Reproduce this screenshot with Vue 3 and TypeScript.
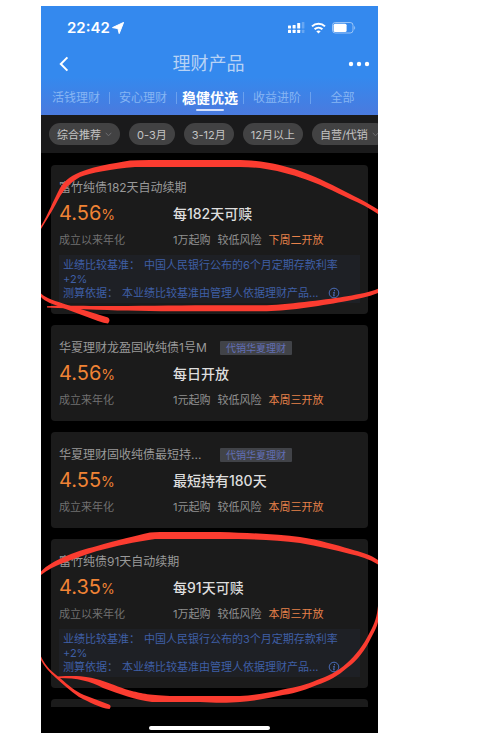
<script setup lang="ts">
import { ref } from 'vue'

interface Product {
  name: string
  tag?: string
  rate: string
  rateLabel: string
  term: string
  entry: string
  open: string
  benchmark?: string
}

const tabs: string[] = ['活钱理财', '安心理财', '稳健优选', '收益进阶', '全部']
const activeTab = ref<string>('稳健优选')

const filters: { label: string; menu?: boolean }[] = [
  { label: '综合推荐', menu: true },
  { label: '0-3月' },
  { label: '3-12月' },
  { label: '12月以上' },
  { label: '自营/代销', menu: true },
]

const products: Product[] = [
  {
    name: '富竹纯债182天自动续期',
    rate: '4.56',
    rateLabel: '成立以来年化',
    term: '每182天可赎',
    entry: '1万起购',
    open: '下周二开放',
    benchmark: '中国人民银行公布的6个月定期存款利率',
  },
  {
    name: '华夏理财龙盈固收纯债1号M',
    tag: '代销华夏理财',
    rate: '4.56',
    rateLabel: '成立来年化',
    term: '每日开放',
    entry: '1元起购',
    open: '本周三开放',
  },
  {
    name: '华夏理财固收纯债最短持...',
    tag: '代销华夏理财',
    rate: '4.55',
    rateLabel: '成立来年化',
    term: '最短持有180天',
    entry: '1元起购',
    open: '本周三开放',
  },
  {
    name: '富竹纯债91天自动续期',
    rate: '4.35',
    rateLabel: '成立以来年化',
    term: '每91天可赎',
    entry: '1万起购',
    open: '本周三开放',
    benchmark: '中国人民银行公布的3个月定期存款利率',
  },
]
</script>

<template>
  <div class="page" lang="zh-CN">
    <main class="phone">
      <header class="header">
        <div class="status">
          <span class="time">22:42</span>
          <svg class="locate" width="12" height="12" viewBox="0 0 12 12" aria-hidden="true">
            <path d="M11.6.4 7.2 11.6 5.9 6.6.5 5.6Z" fill="#fff" stroke="#fff" stroke-width="1" stroke-linejoin="round" />
          </svg>
          <span class="status-icons">
            <svg width="17" height="12" viewBox="0 0 17 12" aria-hidden="true">
              <g fill="#fff">
                <rect x="0" y="3.5" width="3" height="3" rx=".5" />
                <rect x="4.6" y="3" width="3" height="3.5" rx=".5" />
                <rect x="9.2" y="1" width="3" height="5.5" rx=".5" />
                <rect x="0" y="7.8" width="3" height="3.2" rx=".5" />
                <rect x="4.6" y="7.8" width="3" height="3.2" rx=".5" />
                <rect x="9.2" y="7.8" width="3" height="3.2" rx=".5" />
                <rect x="13.8" y="0" width="2.6" height="6.5" rx=".5" opacity=".25" />
                <rect x="13.8" y="7.8" width="2.6" height="3.2" rx=".5" opacity=".25" />
              </g>
            </svg>
            <svg width="15" height="12" viewBox="0 0 15 12" aria-hidden="true">
              <g fill="none" stroke="#fff" stroke-width="2">
                <path d="M1 4.4C4.6.8 10.4.8 14 4.4" />
                <path d="M3.6 7.2c2.2-2.1 5.6-2.1 7.8 0" />
              </g>
              <path d="M7.5 11.6 5.3 9.3c1.3-1.1 3.1-1.1 4.4 0Z" fill="#fff" />
            </svg>
            <svg width="24" height="12" viewBox="0 0 24 12" aria-hidden="true">
              <rect x=".5" y=".5" width="20.5" height="10.5" rx="2.8" fill="none" stroke="#fff" stroke-opacity=".5" />
              <rect x="1.6" y="1.7" width="13" height="8.2" rx="1.5" fill="#fff" />
              <path d="M22.2 4v3.8c1.3-.6 1.3-3.2 0-3.8Z" fill="#fff" fill-opacity=".5" />
            </svg>
          </span>
        </div>

        <div class="title-bar">
          <button class="icon-button" type="button" aria-label="返回">
            <svg width="10" height="16" viewBox="0 0 10 16" aria-hidden="true">
              <path d="M8.4 1.4 1.8 8l6.6 6.6" fill="none" stroke="#fff" stroke-width="2" />
            </svg>
          </button>
          <h1>理财产品</h1>
          <button class="icon-button more" type="button" aria-label="更多">
            <svg width="22" height="6" viewBox="0 0 22 6" aria-hidden="true">
              <g fill="#fff">
                <circle cx="3" cy="3" r="2.2" />
                <circle cx="11" cy="3" r="2.2" />
                <circle cx="19" cy="3" r="2.2" />
              </g>
            </svg>
          </button>
        </div>

        <nav class="tabs">
          <button
            v-for="tab in tabs"
            :key="tab"
            type="button"
            class="tab"
            :class="{ active: tab === activeTab }"
            @click="activeTab = tab"
          >
            {{ tab }}
          </button>
        </nav>
      </header>

      <div class="filters">
        <button v-for="item in filters" :key="item.label" type="button" class="pill">
          {{ item.label }}
          <svg v-if="item.menu" width="7" height="5" viewBox="0 0 7 5" aria-hidden="true">
            <path d="m.7.8 2.8 3 2.8-3" fill="none" stroke="#6c6c6f" />
          </svg>
        </button>
      </div>

      <section class="list">
        <article v-for="product in products" :key="product.name" class="card">
          <div class="card-head">
            <h2 :class="{ tagged: product.tag }">{{ product.name }}</h2>
            <span v-if="product.tag" class="tag">{{ product.tag }}</span>
          </div>
          <div class="row figures">
            <span class="rate">{{ product.rate }}<small>%</small></span>
            <strong class="term">{{ product.term }}</strong>
          </div>
          <div class="row meta">
            <span class="label">{{ product.rateLabel }}</span>
            <span class="facts">
              <span>{{ product.entry }}</span>
              <span>较低风险</span>
              <span class="open">{{ product.open }}</span>
            </span>
          </div>
          <div v-if="product.benchmark" class="note">
            <p><span class="note-label">业绩比较基准：</span>{{ product.benchmark }}<br />+2%</p>
            <p class="basis">
              <span><span class="note-label">测算依据：</span>本业绩比较基准由管理人依据理财产品...</span>
              <svg width="12" height="12" viewBox="0 0 12 12" aria-hidden="true">
                <circle cx="6" cy="6" r="4.8" fill="none" stroke="#4a6cb8" />
                <path d="M6.5 3.1v1.2M5.2 5.5h1L5.7 8.6h1" fill="none" stroke="#4a6cb8" stroke-width="1.1" />
              </svg>
            </p>
          </div>
        </article>
        <div class="card next"></div>
      </section>

      <footer class="home"><span class="home-bar"></span></footer>

      <svg class="marks" viewBox="41 6 337 727" preserveAspectRatio="none" aria-hidden="true">
        <g fill="#fb3c30">
          <path d="M41 226C48 215 53 201 60 188C70 172 90 167 130 160.500Q136 160 150 160H235C262 160 282 165 300 171C320 178 334 186 350 194C362 200 371 205 378 209.500V214C369 208 360 203 350 199C335 192 318 183 300 177.500C280 171 262 167 240 167H135C112 169 90 173 80 177C62 187 59 200 52 211L41 229Z" />
          <path d="M47 306.300C60 305.500 80 305.800 97 306C140 306 170 305.200 210 305.200H267C292 304 330 299 347 296.200C360 294 370 292 378 288.700V293C368 297 357 299 347 301C325 305 290 311 267 311.200H210C165 311.500 130 311 97 309.800C80 309 60 308 47 307.400Z" />
          <path d="M41 293.500C47 299 56 301 66 304.500L108 317.500Q111 320 108 323.500Q104 323 98 321L63 308C53 304 45 302 41 297Z" />
          <path d="M41 571.500C47 565 55 561 63 557.500C75 552 85 549 97 546C118 540 135 536 150 532.500Q154 532 160 532H220C250 533 278 534 300 537C320 540 336 545 350 549C361 552 371 555 378 560V564.500C369 559 360 556 350 554C335 550 318 546 300 543C275 540 250 539 220 539H155C134 542 116 546 97 551C84 555 74 559 63 563C55 566 47 570 41 575Z" />
          <path d="M378 606C377 616 375 623 370 632C363 646 356 655 347 663C337 672 328 676 317 680C306 685 296 687 283 689.500C268 693 254 695 240 696H170C147 695 140 693 130 690.500C118 687 110 683 100 680C90 677 80 675 58 676.500V678C78 678 90 681 103 688C120 694 135 700 152 702H200C215 703 229 703 240 702C255 701 269 698 283 695C297 693 307 689 317 685C329 681 338 676 347 668C358 660 365 650 371 638C374 632 377 627 378 622Z" />
          <path d="M41 656.500C46 667 52 672 60 678C69 686 75 691 84 695L109 704.500Q112 706 109.500 709C100 708 89 702 79 697C70 691 63 684 56 678C49 672 44 666 41 660Z" />
        </g>
      </svg>
    </main>
  </div>
</template>

<style>
body {
  margin: 0;
  background: #fff;
}
</style>

<style scoped>
.page {
  padding: 6px 102px 0 41px;
  font-family: Inter, 'Noto Sans CJK SC', sans-serif;
}

.phone {
  position: relative;
  overflow: hidden;
  background: #000;
}

button {
  margin: 0;
  padding: 0;
  border: 0;
  background: none;
  font: inherit;
  color: inherit;
}

svg {
  display: block;
  flex: none;
}

h1,
h2,
p {
  margin: 0;
  font-weight: 400;
}

.header {
  display: flex;
  flex-direction: column;
  background: linear-gradient(#3489ee 0%, #3489ee 65%, #4a7ade 100%);
}

.status {
  display: flex;
  align-items: center;
  height: 24px;
  padding: 10px 22px 6px 26px;
  color: #fff;
}

.time {
  font-size: 15px;
  font-weight: 600;
  line-height: 20px;
}

.locate {
  margin-left: 2px;
}

.status-icons {
  display: flex;
  gap: 6px;
  margin-left: auto;
}

.title-bar {
  display: grid;
  grid-template-columns: 1fr auto 1fr;
  align-items: center;
  height: 36px;
  padding: 0 8px 0 18px;
}

.icon-button {
  justify-self: start;
}

.icon-button.more {
  justify-self: end;
}

h1 {
  padding-right: 12px;
  font-size: 18px;
  line-height: 26px;
  color: #b7d2f5;
}

.tabs {
  display: flex;
  align-items: center;
  height: 33px;
  padding: 0 4px 0 2px;
  margin-top: -1px;
  margin-bottom: 1px;
}

.tab {
  position: relative;
  padding: 0 9px;
  border-right: 1px solid #6ba1ee;
  font-size: 12px;
  line-height: 12px;
  white-space: nowrap;
  color: #86b5f3;
}

.tab:last-child {
  flex: 1;
  border-right: 0;
}

.tab.active {
  padding: 0 5px;
  font-size: 14px;
  font-weight: 700;
  color: #fff;
}

.tab.active::after {
  content: '';
  position: absolute;
  left: 50%;
  bottom: -7px;
  width: 28px;
  height: 2px;
  margin-left: -14px;
  border-radius: 1px;
  background: #d5e1fa;
}

.filters {
  display: flex;
  align-items: center;
  gap: 9px;
  height: 38px;
  padding-left: 8px;
  overflow: hidden;
  background: #1a1a1b;
}

.pill {
  display: flex;
  flex: none;
  align-items: center;
  gap: 4px;
  height: 22px;
  padding: 0 8px;
  border-radius: 11px;
  background: #424243;
  font-size: 11px;
  white-space: nowrap;
  color: #c4c4c4;
}

.list {
  display: flex;
  flex-direction: column;
  gap: 11px;
  padding: 12px 10px 0;
}

.card {
  display: flex;
  flex-direction: column;
  gap: 4px;
  padding: 14px 8px 11px;
  border-radius: 4px;
  background: #1b1b1b;
}

.card.next {
  height: 8px;
  padding: 0;
  border-radius: 4px 4px 0 0;
}

.card-head {
  display: flex;
  align-items: center;
  gap: 9px;
  height: 18px;
}

h2 {
  font-size: 12px;
  line-height: 18px;
  white-space: nowrap;
  color: #999;
}

h2.tagged {
  min-width: 152px;
}

.tag {
  padding: 0 6px;
  border-radius: 1px;
  background: #414348;
  font-size: 10px;
  line-height: 14px;
  white-space: nowrap;
  color: #626fb5;
}

.row {
  display: grid;
  grid-template-columns: 114px 1fr;
  align-items: center;
  white-space: nowrap;
}

.figures {
  height: 26px;
}

.rate {
  font-size: 20px;
  line-height: 24px;
  color: #f08335;
}

.rate small {
  font-size: 14px;
}

.term {
  font-size: 14px;
  font-weight: 500;
  line-height: 24px;
  color: #dedede;
}

.meta {
  height: 19px;
  font-size: 11px;
  line-height: 19px;
}

.label {
  color: #707070;
}

.facts {
  display: flex;
  gap: 7px;
  color: #919191;
}

.open {
  color: #e8824a;
}

.note {
  margin-top: 1px;
  padding: 3px 4px;
  background: #1e2025;
  font-size: 11px;
  line-height: 14px;
  white-space: nowrap;
  color: #3f5fa6;
}

.note-label {
  margin-right: 4px;
}

.basis {
  display: flex;
  align-items: center;
  gap: 9px;
  height: 14px;
}

.home {
  display: flex;
  justify-content: center;
  height: 26px;
  align-items: flex-end;
}

.home-bar {
  width: 36%;
  height: 4px;
  margin-bottom: 3px;
  border-radius: 2px;
  background: #fff;
}

.marks {
  position: absolute;
  inset: 0;
  width: 100%;
  height: 100%;
  pointer-events: none;
}
</style>
